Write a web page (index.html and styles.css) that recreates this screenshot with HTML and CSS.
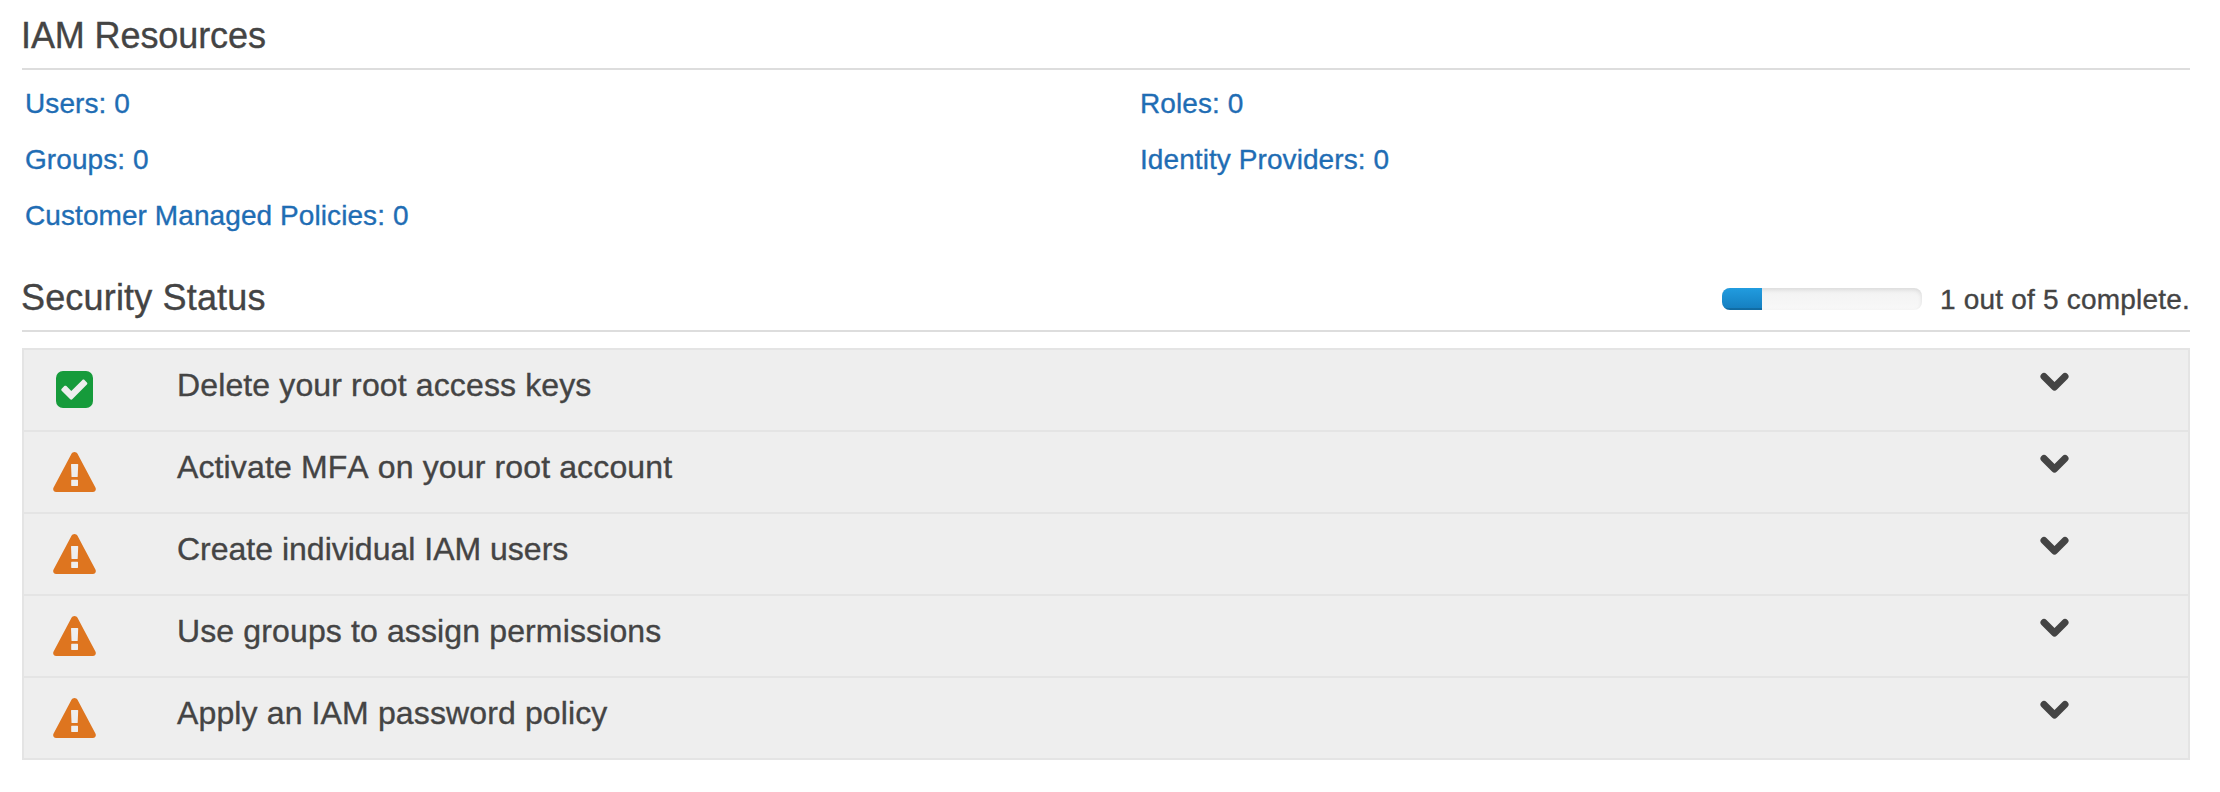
FILE: index.html
```html
<!DOCTYPE html>
<html lang="en">
<head>
<meta charset="utf-8">
<title>IAM Dashboard</title>
<link rel="stylesheet" href="styles.css">
</head>
<body>
<svg class="sprite" aria-hidden="true">
  <symbol id="warning" viewBox="0 0 43 40">
    <path fill="#de751f" d="M21.5 0c1.3 0 2.4.7 3 1.800l17.900 33.800c1.200 2.200-.3 4.400-2.500 4.400H3.100c-2.200 0-3.700-2.200-2.500-4.400L18.500 1.800c.6-1.100 1.700-1.800 3-1.800z"/>
    <path fill="#eee" d="M18.600 12h6c.4 0 .6.3.6.6l-.5 11.800c0 .4-.3.6-.6.6h-5c-.4 0-.6-.2-.6-.6L18 12.600c0-.3.2-.6.6-.6zM18.700 27.700h5.800c.3 0 .5.2.5.500v5.300c0 .3-.2.500-.5.500h-5.800c-.3 0-.5-.2-.5-.5v-5.300c0-.3.200-.5.500-.5z"/>
  </symbol>
  <symbol id="done" viewBox="0 0 37 37">
    <rect width="37" height="37" rx="7" fill="#169b3b"/>
    <path fill="#eee" d="M14 28.100 5.700 19.800c-.6-.6-.6-1.500 0-2.100l2.600-2.600c.6-.6 1.500-.6 2.100 0l4.900 4.900L26.400 9c.6-.6 1.500-.6 2.100 0l2.400 2.400c.6.6.6 1.500 0 2.100L16.500 28.100c-.7.7-1.800.7-2.500 0z"/>
  </symbol>
  <symbol id="chevron" viewBox="0 0 30 20">
    <path d="M5 5.500 15.500 16 26 5.500" fill="none" stroke="#444" stroke-width="7" stroke-linecap="round" stroke-linejoin="round"/>
  </symbol>
</svg>
<main class="dashboard">
  <header class="section-head">
    <h2 class="section-title section-title-tight">IAM Resources</h2>
  </header>
  <div class="resources">
    <ul class="resource-list">
      <li><a class="resource-link">Users: 0</a></li>
      <li><a class="resource-link">Groups: 0</a></li>
      <li><a class="resource-link">Customer Managed Policies: 0</a></li>
    </ul>
    <ul class="resource-list">
      <li><a class="resource-link">Roles: 0</a></li>
      <li><a class="resource-link">Identity Providers: 0</a></li>
    </ul>
  </div>
  <header class="section-head">
    <h2 class="section-title">Security Status</h2>
    <div class="progress"><div class="progress-fill" style="width:20%"></div></div>
    <span class="progress-text">1 out of 5 complete.</span>
  </header>
  <ul class="checks">
    <li class="check"><span class="check-icon"><svg class="icon-done"><use href="#done"/></svg></span><span class="check-label">Delete your root access keys</span><svg class="chevron"><use href="#chevron"/></svg></li>
    <li class="check"><span class="check-icon"><svg class="icon-warning"><use href="#warning"/></svg></span><span class="check-label">Activate MFA on your root account</span><svg class="chevron"><use href="#chevron"/></svg></li>
    <li class="check"><span class="check-icon"><svg class="icon-warning"><use href="#warning"/></svg></span><span class="check-label check-label-tight">Create individual IAM users</span><svg class="chevron"><use href="#chevron"/></svg></li>
    <li class="check"><span class="check-icon"><svg class="icon-warning"><use href="#warning"/></svg></span><span class="check-label">Use groups to assign permissions</span><svg class="chevron"><use href="#chevron"/></svg></li>
    <li class="check"><span class="check-icon"><svg class="icon-warning"><use href="#warning"/></svg></span><span class="check-label">Apply an IAM password policy</span><svg class="chevron"><use href="#chevron"/></svg></li>
  </ul>
</main>
</body>
</html>
```
FILE: styles.css
```css
* {
  box-sizing: border-box;
}

body {
  margin: 0;
  background: #fff;
  color: #444;
  font-family: "Liberation Sans", Arial, sans-serif;
  font-kerning: none;
  -webkit-text-stroke: 0.35px currentColor;
}

ul {
  margin: 0;
  padding: 0;
  list-style: none;
}

.sprite {
  display: none;
}

.dashboard {
  padding: 10px 30px 0 22px;
}

.section-head {
  display: flex;
  height: 60px;
  border-bottom: 2px solid #ddd;
}

.section-title {
  flex: 1;
  margin: 0 0 0 -1px;
  font-size: 36px;
  font-weight: 400;
  line-height: 51px;
  letter-spacing: 0.17px;
}

.section-title-tight {
  letter-spacing: -0.1px;
}

.resources {
  display: grid;
  grid-template-columns: 1115px 1fr;
  height: 202px;
  padding: 6px 0 0 3px;
}

.resource-link {
  color: #1f6db4;
  font-size: 28px;
  line-height: 56px;
  letter-spacing: 0.08px;
}

.resource-list li {
  height: 56px;
}

.progress {
  width: 200px;
  height: 22px;
  margin: 16px 18px 0 0;
  overflow: hidden;
  border-radius: 8px;
  background: linear-gradient(#f2f2f2, #f8f8f8);
  box-shadow: inset 0 2px 4px rgba(0, 0, 0, 0.1);
}

.progress-fill {
  height: 100%;
  background: linear-gradient(#219cdf, #147dbe);
  box-shadow: inset 0 -2px 0 rgba(0, 0, 0, 0.15);
}

.progress-text {
  width: 250px;
  font-size: 28px;
  line-height: 56px;
  letter-spacing: 0.2px;
  white-space: nowrap;
}

.checks {
  margin-top: 16px;
  border: 2px solid #e4e4e4;
  background: #eee;
}

.check {
  display: flex;
  height: 82px;
  border-bottom: 2px solid #e4e4e4;
}

.check:last-child {
  height: 80px;
  border-bottom: 0;
}

.check-icon {
  display: flex;
  justify-content: center;
  width: 101px;
  padding-top: 20px;
}

.icon-done {
  width: 37px;
  height: 37px;
  margin-top: 1px;
}

.icon-warning {
  width: 43px;
  height: 40px;
}

.check-label {
  flex: 1;
  padding-left: 52px;
  font-size: 32px;
  line-height: 70px;
  letter-spacing: 0.13px;
}

.check-label-tight {
  letter-spacing: 0;
}

.chevron {
  width: 30px;
  height: 20px;
  margin: 21px 119px 0 0;
}
```
